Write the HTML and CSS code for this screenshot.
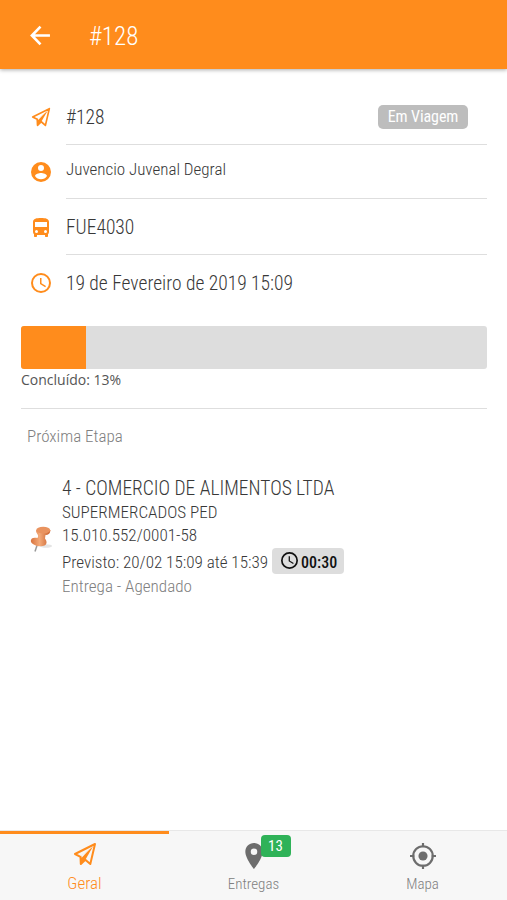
FILE: index.html
```html
<!DOCTYPE html>
<html lang="pt-BR">
<head>
<meta charset="utf-8">
<title>#128</title>
<link rel="stylesheet" href="styles.css">
</head>
<body>
<svg class="defs" width="0" height="0">
  <symbol id="plane" viewBox="0 0 24 24"><path d="M22 2 2 12l5.500 2.800L7.800 22l4.500-4.300 5 4.300z" fill="none" stroke="currentColor" stroke-width="2" stroke-linejoin="round"/><path d="M20 4.500 12.500 17.500 7.800 22.500 7 15z" fill="currentColor"/><path d="M18.300 5.500 8.300 13.600l.4 2.100z" fill="var(--gap, #fff)"/></symbol>
  <symbol id="clock" viewBox="0 0 24 24"><path fill="currentColor" d="M12 2a10 10 0 1 0 0 20 10 10 0 0 0 0-20zm0 18a8 8 0 1 1 0-16 8 8 0 0 1 0 16zm.5-13H11v6l5.200 3.200.8-1.300-4.500-2.700z"/></symbol>
</svg>
<header class="toolbar">
  <svg class="back" viewBox="0 0 20 20"><path d="M19 10H2M10 1.500 1.800 10l8.200 8.500" fill="none" stroke="currentColor" stroke-width="2.500"/></svg>
  <h1><span class="t title">#128</span></h1>
</header>
<main>
  <section class="details">
    <div class="row r1"><svg class="icon plane"><use href="#plane"/></svg><div class="cell"><span class="t big code">#128</span><span class="status"><span class="t status-text">Em Viagem</span></span></div></div>
    <div class="row r2"><svg class="icon" viewBox="2 2 20 20"><path fill="currentColor" fill-rule="evenodd" d="M12 2a10 10 0 1 0 0 20 10 10 0 0 0 0-20zm0 3a3 3 0 1 1 0 6 3 3 0 0 1 0-6zm0 14.200a7.200 7.200 0 0 1-6-3.200c0-2 4-3.100 6-3.100s6 1.100 6 3.100a7.200 7.200 0 0 1-6 3.200z"/></svg><div class="cell"><span class="t driver">Juvencio Juvenal Degral</span></div></div>
    <div class="row r3"><svg class="icon" viewBox="2 2 20 20"><path fill="currentColor" fill-rule="evenodd" d="M4 16c0 .9.400 1.700 1 2.200V20c0 .6.400 1 1 1h1c.6 0 1-.4 1-1v-1h8v1c0 .6.400 1 1 1h1c.6 0 1-.4 1-1v-1.800c.6-.5 1-1.300 1-2.200V6c0-3.500-3.600-4-8-4s-8 .5-8 4zm3.500 1a1.500 1.500 0 1 1 0-3 1.500 1.500 0 0 1 0 3zm9 0a1.500 1.500 0 1 1 0-3 1.500 1.500 0 0 1 0 3zM18 11H6V6h12z"/></svg><div class="cell"><span class="t big plate">FUE4030</span></div></div>
    <div class="row r4"><svg class="icon" viewBox="2 2 20 20"><use href="#clock" width="24" height="24"/></svg><div class="cell"><span class="t big date">19 de Fevereiro de 2019 15:09</span></div></div>
  </section>
  <section class="progress">
    <div class="track"><div class="fill" style="width:14%"></div></div>
    <p class="done">Concluído: 13%</p>
  </section>
  <h2><span class="t next">Próxima Etapa</span></h2>
  <section class="stop">
    <svg class="pin" viewBox="0 0 24 28"><defs><linearGradient id="p"><stop stop-color="#d9733d"/><stop offset=".45" stop-color="#f3aa79"/><stop offset="1" stop-color="#c9602c"/></linearGradient></defs><ellipse cx="16" cy="20" rx="6" ry="1.800" fill="#e4e4e4"/><path d="M7.500 18 5 25.500" stroke="#999" stroke-width="1.500"/><path d="M6 4.500c0 2.500 2 3.500 2.200 5.500L7.500 12C3.500 11 .8 12 .8 15c.7 5.500 15 7.500 15.700 2 .3-2-.7-3-1.500-4.500l.5-3.500c3 0 5-2 4.800-5z" fill="url(#p)"/><ellipse cx="13.200" cy="4.200" rx="7" ry="3.400" fill="#e9935f"/></svg>
    <div class="lines">
      <div class="l l1"><span class="t">4 - COMERCIO DE ALIMENTOS LTDA</span></div>
      <div class="l l2"><span class="t">SUPERMERCADOS PED</span></div>
      <div class="l l3"><span class="t">15.010.552/0001-58</span></div>
      <div class="l l4"><span class="t">Previsto: 20/02 15:09 até 15:39</span><span class="time"><svg viewBox="2 2 20 20"><use href="#clock" width="24" height="24"/></svg><b class="t">00:30</b></span></div>
      <div class="l l5"><span class="t">Entrega - Agendado</span></div>
    </div>
  </section>
</main>
<nav class="tabs">
  <div class="tab active"><svg class="plane"><use href="#plane"/></svg><span class="t">Geral</span></div>
  <div class="tab"><div class="holder"><svg viewBox="0 0 24 24"><path fill="currentColor" fill-rule="evenodd" d="M12 0C7.400 0 4 3.600 4 8c0 6.200 8 16 8 16s8-9.800 8-16c0-4.400-3.400-8-8-8zm0 11a3 3 0 1 1 0-6 3 3 0 0 1 0 6z"/></svg><span class="badge"><span class="t">13</span></span></div><span class="t">Entregas</span></div>
  <div class="tab"><svg viewBox="0 0 24 24" fill="none" stroke="currentColor" stroke-width="2"><circle cx="12" cy="12" r="9"/><circle cx="12" cy="12" r="4.200" fill="currentColor" stroke="none"/><path d="M12 0v4M12 20v4M0 12h4M20 12h4"/></svg><span class="t">Mapa</span></div>
</nav>
</body>
</html>
```
FILE: styles.css
```css
* { box-sizing: border-box; margin: 0; padding: 0; }
body { width: 507px; height: 900px; display: flex; flex-direction: column; background: #fff; color: #383838; font-family: "Roboto Condensed", Roboto, sans-serif; font-stretch: 75%; font-weight: 300; overflow: hidden; }
.defs { position: absolute; }
svg { display: block; flex: none; }
.t { display: inline-block; white-space: nowrap; }
.toolbar { height: 69px; flex: none; background: #ff8c1c; color: #fff; display: flex; align-items: center; padding-left: 30px; box-shadow: 0 1px 4px #0005; }
.back { width: 21px; height: 21px; margin-top: 1px; }
h1 { margin-left: 38px; font-size: 25px; font-weight: 300; line-height: 30px; padding-top: 4px; }
main { flex: 1; padding: 20px 20px 0 21px; }
.row { display: flex; align-items: center; padding-left: 10px; }
.icon { width: 20px; height: 20px; color: #ff8c1c; }
.cell { flex: 1; height: 100%; margin-left: 15px; display: flex; align-items: center; justify-content: space-between; border-bottom: 1px solid #dedede; }
.r1 { height: 56px; } .r2 { height: 54px; } .r3 { height: 56px; } .r4 { height: 57px; }
.r3 .icon { margin-top: 2px; }
.r4 .icon { margin-top: -2px; }
.r4 .cell { border: 0; padding-bottom: 2px; }
.r2 .cell { padding-bottom: 6px; }
.big { font-size: 19.500px; padding-top: 2px; }
.driver { font-size: 17px; }
.status { width: 90px; height: 24px; margin-right: 19px; border-radius: 5px; background: #bdbdbd; color: #fff; display: flex; align-items: center; justify-content: center; font-size: 16px; font-weight: 400; }
.status-text { letter-spacing: -.1px; }
.track { margin-top: 14px; height: 43px; background: #ddd; border-radius: 3px; overflow: hidden; }
.fill { height: 100%; background: #ff8c1c; }
.progress { height: 83px; border-bottom: 1px solid #dedede; }
.done { font: 14px/22px "Open Sans", sans-serif; color: #555; }
h2 { height: 56px; padding-left: 6px; font-size: 17px; line-height: 54px; font-weight: 300; color: #808080; }
.stop { display: flex; padding-left: 9px; }
.pin { width: 24px; height: 28px; margin-top: 61px; }
.lines { margin-left: 8px; padding-top: 10px; }
.l { display: flex; align-items: center; height: 24px; font-size: 17.100px; }
.l1 { height: 26px; font-size: 19.500px; } .l2 { height: 21px; } .l3 { height: 26px; } .l4 { height: 27px; } .l5 { height: 22px; color: #808080; }
.time { margin-left: 4px; width: 72px; height: 26px; border-radius: 4px; background: #ddd; color: #111; display: flex; align-items: center; gap: 3px; padding-left: 9px; margin-top: -1px; }
.time svg { width: 17px; height: 17px; margin-top: -2px; }
.time b { font-weight: 500; font-size: 16px; padding-top: 2px; }
.tabs { height: 70px; flex: none; background: #f7f7f7; display: grid; grid-template-columns: repeat(3, 1fr); border-top: 1px solid #e8e8e8; color: #6d6d6d; }
.tab { display: flex; flex-direction: column; align-items: center; padding-top: 12px; font-size: 15px; }
.tab svg { width: 26px; height: 26px; }
.tab > .t { margin-top: 6px; color: #808080; line-height: 18px; }
.tab.active { --gap: #f7f7f7; color: #ff8c1c; border-top: 3px solid #ff8c1c; padding-top: 8px; margin-top: 0; }
.tab.active svg { width: 24px; height: 24px; }
.tab.active > .t { color: #ff8c1c; font-size: 17px; margin-top: 8px; }
.holder { position: relative; }
.badge { position: absolute; left: 20px; top: -8px; width: 30px; height: 22px; border-radius: 4px; background: #2fb258; color: #fff; display: flex; align-items: center; justify-content: center; font-size: 15px; font-weight: 400; }
```
